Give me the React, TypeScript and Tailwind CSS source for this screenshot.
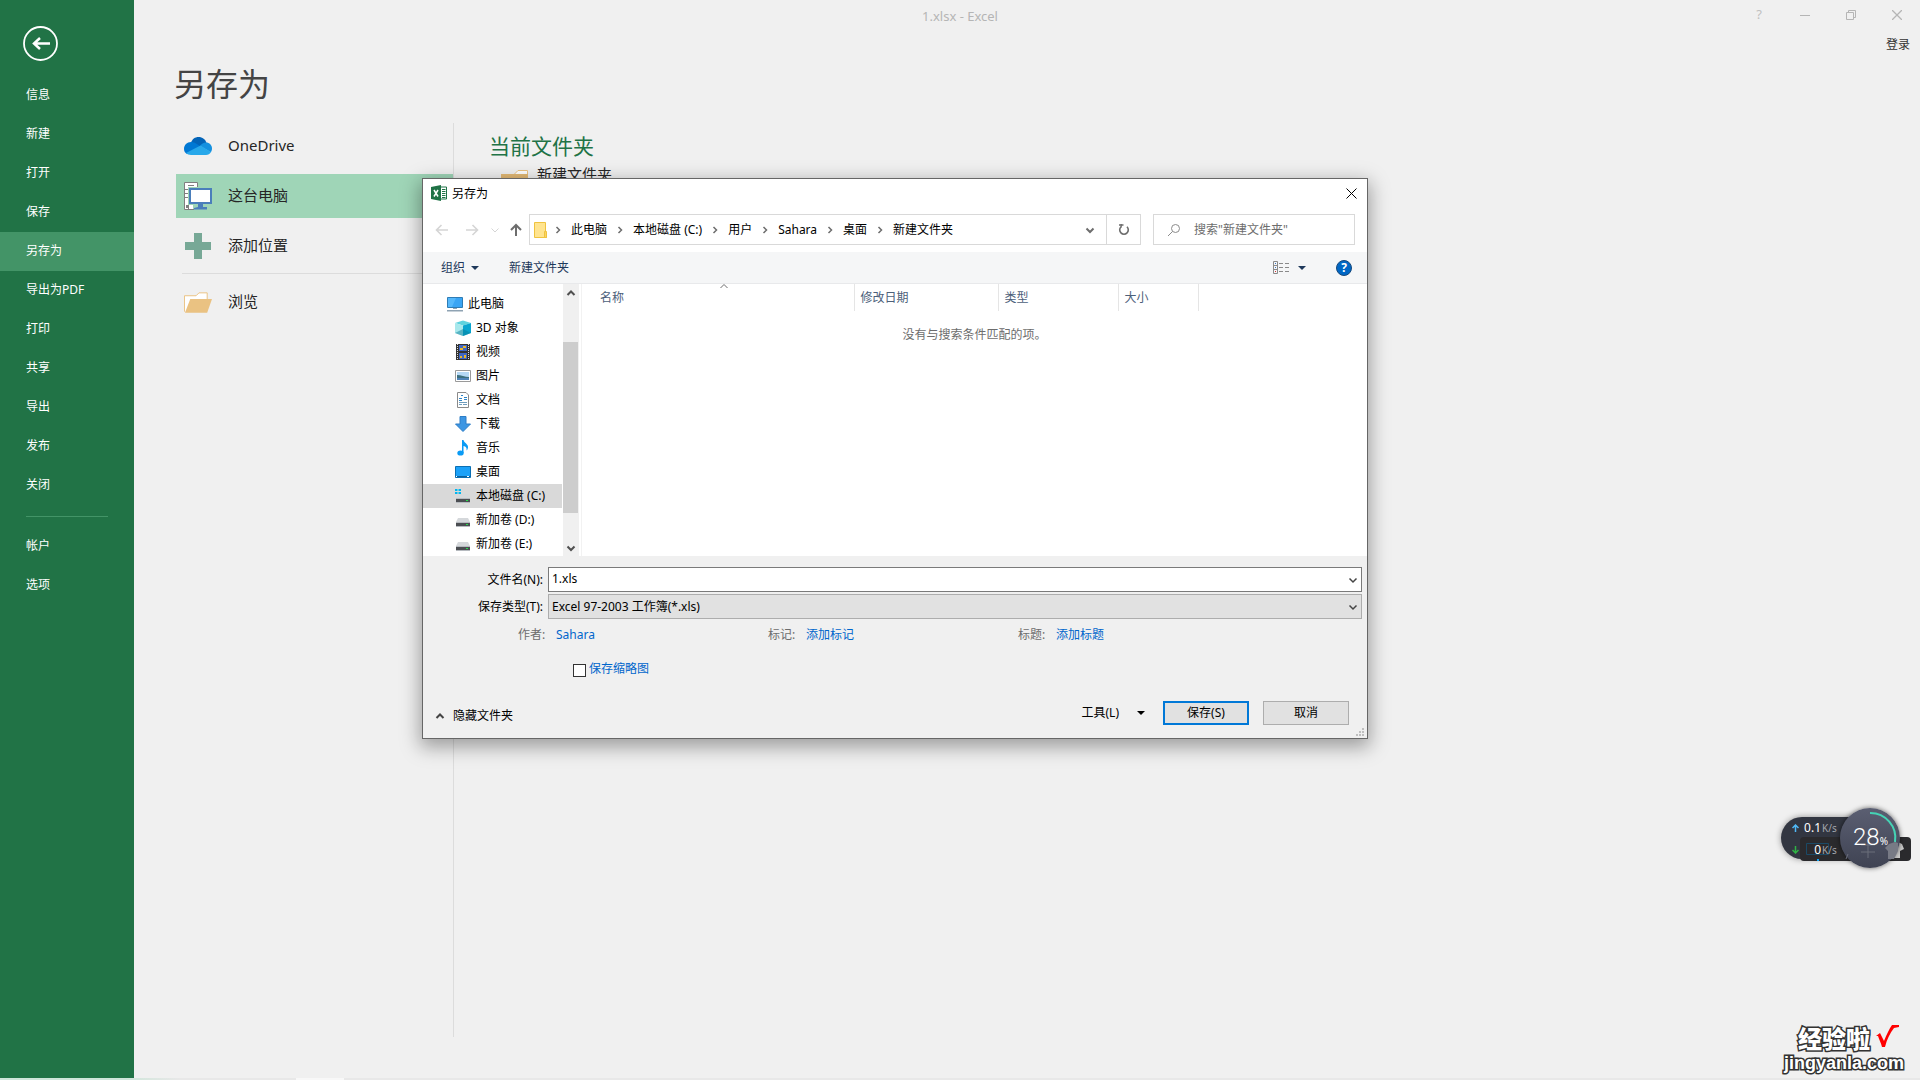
import { Fragment, useState } from "react";
import type { ReactNode } from "react";

const MENU = ["信息", "新建", "打开", "保存", "另存为", "导出为PDF", "打印", "共享", "导出", "发布", "关闭"];
const MENU_BOTTOM = ["帐户", "选项"];
const CRUMBS = ["此电脑", "本地磁盘 (C:)", "用户", "Sahara", "桌面", "新建文件夹"];

const META = [
  { label: "作者:", value: "Sahara" },
  { label: "标记:", value: "添加标记" },
  { label: "标题:", value: "添加标题" },
];

function Chevron({ dir, className }: { dir: "up" | "down" | "right"; className?: string }) {
  const d = { up: "M1.5 7 5 3.5 8.5 7", down: "M1.5 3.5 5 7 8.5 3.5", right: "M3.5 2 6.5 5 3.5 8" }[dir];
  return (
    <svg viewBox="0 0 10 10" className={`w-[10px] h-[10px] shrink-0 ${className ?? ""}`} fill="none" stroke="currentColor">
      <path d={d} />
    </svg>
  );
}

function Triangle({ className }: { className?: string }) {
  return (
    <svg viewBox="0 0 8 4" className={`w-2 h-1 shrink-0 ${className ?? ""}`} fill="currentColor">
      <path d="M0 0h8L4 4z" />
    </svg>
  );
}

function Icon16({ children }: { children: ReactNode }) {
  return (
    <svg viewBox="0 0 16 16" className="w-4 h-4 shrink-0" fill="none">
      {children}
    </svg>
  );
}

function OneDriveIcon() {
  return (
    <svg viewBox="0 0 28 18" className="w-7 h-[18px]">
      <path d="M7 6C8 2 11 0 14.500 0c4 0 7 2.500 8 6L14 11z" fill="#0364b8" />
      <path d="M7 5c2 0 3.500.5 5 1.500L19 11 3 17C1 16 0 14 0 12c0-4 3-7 7-7z" fill="#0078d4" />
      <path d="M22 5.500c3.500 0 6 2.700 6 6 0 1.500-.5 2.800-1.200 3.800L16 9c1.500-2 3.500-3.500 6-3.500z" fill="#1490df" />
      <path d="M16.500 8.500 27 15c-1 2-3 3-5 3H7c-2 0-4-.8-5-2z" fill="#28a8ea" />
    </svg>
  );
}

function ComputerIcon() {
  return (
    <svg viewBox="0 0 28 28" className="w-7 h-7" fill="none">
      <path d="M.5.5h13v27H.5z" fill="#fff" stroke="#7f7f7f" />
      <path d="M4 3.500h6M1 7.500h3M1 11.500h3M1 15.500h3" stroke="#7f7f7f" />
      <path d="M2 23h2v3H2z" fill="#7f7f7f" />
      <path d="M4 5h24v18h-5v5H9v-5H4z" fill="#9fd5b7" />
      <path d="M4.500 23v4.500H10" stroke="#7f7f7f" />
      <path d="M6 7h21v14H6z" fill="#fff" stroke="#4a7ebb" strokeWidth="2" />
      <path d="M14 22h5v3h4v2.500H10V26l4-1z" fill="#4a7ebb" />
    </svg>
  );
}

function PlusIcon() {
  return (
    <svg viewBox="0 0 26 26" className="w-[26px] h-[26px]">
      <path d="M9 0h8v9h9v8h-9v9H9v-9H0V9h9z" fill="#77a896" />
    </svg>
  );
}

function FolderIcon() {
  return (
    <svg viewBox="0 0 29 21" className="w-[29px] h-[21px]">
      <path d="M.5 20V3.500h12l3-3H24V8" fill="#fff" stroke="#eac282" />
      <path d="M6.500 7H29l-5 14H1z" fill="#eac282" />
    </svg>
  );
}

function ClosedFolderIcon() {
  return (
    <svg viewBox="0 0 27 21" className="w-[27px] h-[21px]">
      <path d="M13 4.500 17 .5h9.500V6" fill="#fff" stroke="#eac282" />
      <path d="M0 4h27v17H0z" fill="#e3b974" />
    </svg>
  );
}

function ExcelIcon() {
  return (
    <Icon16>
      <path d="M9 2h6.500v12H9z" fill="#fff" stroke="#1f7246" />
      <path d="M11 4.500h3.500M11 6.500h3.500M11 8.500h3.500M11 10.500h3.500M11 12.500h3.500" stroke="#1f7246" />
      <path d="M0 2 10 0v16L0 14z" fill="#1f7246" />
      <path d="m3 5 4 6.500M7 5l-4 6.500" stroke="#fff" strokeWidth="1.500" />
    </Icon16>
  );
}

function Drive() {
  return (
    <>
      <path d="M3 6h10l2 4H1z" fill="#d5d8db" />
      <path d="M1 10h14v4H1z" fill="#4b4e52" />
      <path d="M1 10h14v1H1zM1 14h14v1H1z" fill="#b6babf" />
      <path d="M11 12h2v1h-2z" fill="#25e04a" />
    </>
  );
}

const TREE: { name: string; root?: boolean; icon: ReactNode }[] = [
  {
    name: "此电脑",
    root: true,
    icon: (
      <>
        <path d="M.5 1.500h15v10H.5z" fill="#55b8fb" stroke="#2e7cb5" />
        <path d="M9 2h6v9H5z" fill="#3aa5f4" />
        <path d="M6 12h4v1H6zM0 14h16v1.500H0z" fill="#8fa3b3" />
      </>
    ),
  },
  {
    name: "3D 对象",
    icon: (
      <>
        <path d="M0 3 8 .5 16 3 8 5.500z" fill="#5fd3de" />
        <path d="M0 3l8 2.500V16l-8-3z" fill="#a8e8ec" />
        <path d="M16 3 8 5.500V16l8-3z" fill="#0aa5cf" />
        <path d="m0 13 8-4 8 4-8 3z" fill="#087f9c" opacity=".5" />
      </>
    ),
  },
  {
    name: "视频",
    icon: (
      <>
        <path d="M1 0h14v16H1z" fill="#333" />
        <path d="M4 1h8v6H4zM4 9h8v6H4z" fill="#3f67c4" />
        <path d="M5 4h3v2H5zM9 11h2v3H9zM8 2h3v2H8zM5 12h2v2H5z" fill="#e8b52c" />
        <path d="M2.500 0v16M13.500 0v16" stroke="#ddd" strokeDasharray="1 1" />
      </>
    ),
  },
  {
    name: "图片",
    icon: (
      <>
        <path d="M.5 2.500h15v11H.5z" fill="#fff" stroke="#9a9a9a" />
        <path d="M2 4h12v8H2z" fill="#b5d8f5" />
        <path d="M2 7c4 0 8 2 12 2v1H2z" fill="#3c6f7e" />
        <path d="M2 10h12v2H2z" fill="#4f83b8" />
      </>
    ),
  },
  {
    name: "文档",
    icon: (
      <>
        <path d="M2.500.5H11L13.500 3v12.500h-11z" fill="#fff" stroke="#8a8a8a" />
        <path d="M4 6.500h3M4 8.500h3M9 5.500h3M9 7.500h3M6 3.500h2" stroke="#2f86c9" />
        <path d="M4 10.500h8M4 12.500h3M8 12.500h4" stroke="#6f9dbd" />
      </>
    ),
  },
  {
    name: "下载",
    icon: <path d="M5 .5h6V8h4.500L8 15.500.5 8H5z" fill="#3c96e3" stroke="#2c7dc6" />,
  },
  {
    name: "音乐",
    icon: (
      <>
        <path d="M7 0h1.500c.5 3 5 4 4.500 7.500-.2 1.500-.8 2.500-1.500 3 .5-2.500-.5-4-3-4.500v7H7z" fill="#0a9bf5" />
        <ellipse cx="5.500" cy="13" rx="3.200" ry="2.600" fill="#0a9bf5" />
      </>
    ),
  },
  {
    name: "桌面",
    icon: (
      <>
        <path d="M.5 2.500h15v11H.5z" fill="#1ba1f8" stroke="#0b6fb3" />
        <path d="M1 12h14v1H1z" fill="#0b5f9b" />
        <path d="M1 12h1v1H1zM12 12h2v1h-2z" fill="#fff" />
      </>
    ),
  },
  {
    name: "本地磁盘 (C:)",
    icon: (
      <>
        <Drive />
        <path d="M0 1h2.500v2H0zM3.500 1H6v2H3.500zM0 4h2.500v2H0zM3.500 4H6v2H3.500z" fill="#00b7f0" />
      </>
    ),
  },
  { name: "新加卷 (D:)", icon: <Drive /> },
  { name: "新加卷 (E:)", icon: <Drive /> },
];

function Sidebar() {
  const item = "h-[39px] w-full shrink-0 pl-[26px] pb-[2px] text-left text-white";
  return (
    <nav className="w-[134px] shrink-0 bg-[#217346] text-xs flex flex-col">
      <div className="h-[76px] shrink-0 pl-[23px] pt-[26px]">
        <button aria-label="返回" className="block">
          <svg viewBox="0 0 35 35" className="w-[35px] h-[35px]" fill="none" stroke="#fff">
            <circle cx="17.500" cy="17.500" r="16.500" strokeWidth="1.800" />
            <path d="M27 17.500H11M17 12l-6 5.500 6 5.500" strokeWidth="2.500" />
          </svg>
        </button>
      </div>
      {MENU.map((m) => (
        <button key={m} className={`${item} ${m === "另存为" ? "bg-[#439467]" : ""}`}>
          {m}
        </button>
      ))}
      <hr className="ml-[26px] mr-[26px] mt-[11px] mb-[10px] border-[#439467]" />
      {MENU_BOTTOM.map((m) => (
        <button key={m} className={item}>
          {m}
        </button>
      ))}
    </nav>
  );
}

function TitleBar() {
  return (
    <header className="absolute inset-x-0 top-0 h-8 flex items-center justify-center text-[#b5b5b5]">
      <span className="text-[13px] pt-[2px]">1.xlsx - Excel</span>
      <div className="absolute right-3 flex items-center gap-[24px] pb-[2px]">
        <button aria-label="帮助" className="w-[22px] text-[13px] text-[#c0c0c0]">
          ?
        </button>
        <button aria-label="最小化" className="w-[22px] flex justify-center">
          <svg viewBox="0 0 10 10" className="w-[10px] h-[10px]" stroke="currentColor">
            <path d="M0 5.500h10" />
          </svg>
        </button>
        <button aria-label="还原" className="w-[22px] flex justify-center">
          <svg viewBox="0 0 10 10" className="w-[10px] h-[10px]" stroke="currentColor" fill="none">
            <path d="M.5 2.500h7v7h-7zM2.500 2.500v-2h7v7h-2" />
          </svg>
        </button>
        <button aria-label="关闭窗口" className="w-[22px] flex justify-center">
          <svg viewBox="0 0 10 10" className="w-[10px] h-[10px]" stroke="currentColor">
            <path d="m0 0 10 10M10 0 0 10" strokeWidth="1.300" />
          </svg>
        </button>
      </div>
    </header>
  );
}

function Place({ icon, name, active }: { icon: ReactNode; name: string; active?: boolean }) {
  return (
    <button
      className={`h-11 w-full flex items-center pl-2 text-[15px] text-[#262626] ${active ? "bg-[#9fd5b7]" : ""}`}
    >
      <span className="w-[28px] mr-4 flex justify-center">{icon}</span>
      <span className="pb-[2px]">{name}</span>
    </button>
  );
}

function Backstage() {
  return (
    <main className="flex-1 min-w-0 flex flex-col pt-[61px] pb-[41px]">
      <h1 className="ml-10 h-[62px] text-[32px] leading-[46px] text-[#444]">另存为</h1>
      <div className="flex flex-1">
        <div className="w-[320px] shrink-0 border-r border-[#dcdcdc] pl-[42px] pt-px flex flex-col gap-[6px]">
          <Place icon={<OneDriveIcon />} name="OneDrive" />
          <Place icon={<ComputerIcon />} name="这台电脑" active />
          <Place icon={<PlusIcon />} name="添加位置" />
          <hr className="ml-[6px] -mt-px border-[#dcdcdc]" />
          <Place icon={<FolderIcon />} name="浏览" />
        </div>
        <div className="pl-[35px] pt-[7px]">
          <h2 className="text-[21px] leading-8 text-[#217346]">当前文件夹</h2>
          <button className="flex items-start pl-3 text-[15px] leading-6 text-[#262626]">
            <span className="w-9 pt-2">
              <ClosedFolderIcon />
            </span>
            新建文件夹
          </button>
        </div>
      </div>
    </main>
  );
}

function AddressRow() {
  return (
    <div className="h-[31px] flex pr-3 pl-3">
      <div className="w-[94px] flex items-center text-[#d5d5d5]">
        <button aria-label="后退" className="mr-4">
          <svg viewBox="0 0 14 14" className="w-[14px] h-[14px]" fill="none" stroke="currentColor" strokeWidth="1.600">
            <path d="M6.500 2 1.500 7l5 5M1.500 7H13" />
          </svg>
        </button>
        <button aria-label="前进" className="mr-[11px]">
          <svg viewBox="0 0 14 14" className="w-[14px] h-[14px]" fill="none" stroke="currentColor" strokeWidth="1.600">
            <path d="M7.500 2l5 5-5 5M12.500 7H1" />
          </svg>
        </button>
        <Chevron dir="down" className="mr-[9px]" />
        <button aria-label="向上" className="text-[#6d6d6d]">
          <svg viewBox="0 0 14 14" className="w-[14px] h-[14px]" fill="none" stroke="currentColor" strokeWidth="2">
            <path d="M2 7l5-5 5 5M7 2v11" />
          </svg>
        </button>
      </div>
      <div className="flex-1 flex items-center border border-[#d9d9d9] pl-1">
        <svg viewBox="0 0 13 16" className="w-[13px] h-4 -mr-[2px]">
          <path d="M.5.5h11V11h1v4.500H.5z" fill="#ffe48f" stroke="#efc33f" />
          <path d="M10.500 9.500h2v6h-2z" fill="#fcd462" stroke="#efc33f" />
        </svg>
        {CRUMBS.map((c) => (
          <Fragment key={c}>
            <span className="w-[26px] flex justify-center text-[#6d6d6d]">
              <Chevron dir="right" className="[stroke-width:1.5]" />
            </span>
            <button className="text-black">{c}</button>
          </Fragment>
        ))}
        <button aria-label="历史位置" className="ml-auto mr-[11px] text-[#6d6d6d]">
          <Chevron dir="down" className="stroke-2" />
        </button>
        <button
          aria-label="刷新"
          className="w-[34px] h-full border-l border-[#d9d9d9] flex items-center justify-center text-[#6d6d6d]"
        >
          <svg viewBox="0 0 12 12" className="w-3 h-3" fill="none" stroke="currentColor" strokeWidth="1.600">
            <path d="M3 2.800A4.300 4.300 0 1 0 9 2.800" />
            <path d="M3.200 0v3.500M1 1h4.500" strokeWidth="1.300" />
          </svg>
        </button>
      </div>
      <label className="ml-3 w-[202px] flex items-center border border-[#d9d9d9] pl-[14px]">
        <svg viewBox="0 0 12 12" className="w-3 h-3 mr-[14px] shrink-0" fill="none" stroke="#8b8b8b">
          <circle cx="7.500" cy="4.500" r="4" />
          <path d="M4.500 7.500 0 12" />
        </svg>
        <input
          aria-label="搜索"
          placeholder={'搜索"新建文件夹"'}
          className="w-full min-w-0 bg-transparent outline-none placeholder:text-[#6d6d6d]"
        />
      </label>
    </div>
  );
}

function Toolbar() {
  return (
    <div className="h-8 mt-[7px] flex items-center bg-[#f5f6f7] border-b border-[#e8e9eb] pl-[18px] pr-[15px] text-[#1e395b]">
      <button className="flex items-center gap-[6px]">
        组织 <Triangle />
      </button>
      <button className="ml-[30px]">新建文件夹</button>
      <button aria-label="更改视图" className="ml-auto mr-[30px] flex items-center gap-[9px]">
        <svg viewBox="0 0 16 13" className="w-4 h-[13px]" fill="none" stroke="#8a8a8a">
          <path d="M.5.5h4v12h-4zM.5 4.500h4M.5 8.500h4M6 2.500h4M12 2.500h4M6 6.500h4M12 6.500h4M6 10.500h4M12 10.500h4" />
          <path d="M2 2.500h1M2 6.500h1" stroke="#3a78c8" />
          <path d="M2 10.500h1" stroke="#d33" />
        </svg>
        <Triangle />
      </button>
      <button
        aria-label="获取帮助"
        className="w-4 h-4 rounded-full bg-[#0067c5] border border-[#17497c] text-white font-bold leading-none"
      >
        ?
      </button>
    </div>
  );
}

function FileArea() {
  const [selected, setSelected] = useState("本地磁盘 (C:)");
  const col = "border-r border-[#e5e5e5] font-normal text-left pl-[6px]";
  return (
    <div className="h-[272px] flex bg-white">
      <ul className="w-[140px] pt-2 pr-px">
        {TREE.map((t) => (
          <li key={t.name}>
            <button
              onClick={() => setSelected(t.name)}
              className={`w-full h-6 flex items-center gap-[5px] text-black ${t.root ? "pl-6" : "pl-8"} ${
                t.name === selected ? "bg-[#d9d9d9]" : ""
              }`}
            >
              <Icon16>{t.icon}</Icon16>
              {t.name}
            </button>
          </li>
        ))}
      </ul>
      <div className="w-4 mr-[2px] bg-[#f0f0f0] flex flex-col items-center text-[#505050]">
        <Chevron dir="up" className="mt-1 mb-[44px] stroke-2" />
        <div className="w-[15px] h-[171px] mr-px bg-[#cdcdcd]" />
        <Chevron dir="down" className="mt-auto mb-[3px] stroke-2" />
      </div>
      <div className="flex-1 border-l border-[#f2f2f2]">
        <table className="table-fixed w-[616px] h-[27px] text-[#4c607a]">
          <thead>
            <tr>
              <th className={`${col} w-[272px] relative`}>
                <span className="pl-3">名称</span>
                <Chevron dir="up" className="absolute left-[137px] -top-[3px] text-[#6d6d6d]" />
              </th>
              <th className={`${col} w-36`}>修改日期</th>
              <th className={`${col} w-[120px]`}>类型</th>
              <th className={`${col} w-20`}>大小</th>
            </tr>
          </thead>
        </table>
        <p className="mt-4 text-center text-[#6d6d6d]">没有与搜索条件匹配的项。</p>
      </div>
    </div>
  );
}

function SaveForm() {
  const [name, setName] = useState("1.xls");
  return (
    <div className="pt-[11px] pr-[5px] text-black">
      <div className="grid grid-cols-[120px_1fr] gap-x-[5px] gap-y-[2px] items-center">
        <label htmlFor="filename" className="text-right">
          文件名(N):
        </label>
        <div className="h-[25px] flex items-center bg-white border border-[#7a7a7a] pl-[3px] pr-[3px]">
          <input
            id="filename"
            value={name}
            onChange={(e) => setName(e.target.value)}
            className="flex-1 bg-transparent outline-none pb-[2px]"
          />
          <Chevron dir="down" className="text-[#444] [stroke-width:1.5]" />
        </div>
        <label htmlFor="filetype" className="text-right">
          保存类型(T):
        </label>
        <div className="relative h-[25px]">
          <select
            id="filetype"
            className="w-full h-full appearance-none bg-[#e1e1e1] border border-[#adadad] pl-[3px] outline-none"
          >
            <option>Excel 97-2003 工作簿(*.xls)</option>
          </select>
          <Chevron dir="down" className="absolute right-1 top-2 text-[#444] [stroke-width:1.5]" />
        </div>
      </div>
      <dl className="flex mt-2 pl-[95px]">
        {META.map((m) => (
          <div key={m.label} className="w-[250px] flex">
            <dt className="w-[38px] text-[#6d6d6d]">{m.label}</dt>
            <dd>
              <a href="#" className="text-[#0066cc]">
                {m.value}
              </a>
            </dd>
          </div>
        ))}
      </dl>
      <label className="mt-[18px] ml-[150px] w-fit flex items-end gap-[3px] text-[#0066cc]">
        <input type="checkbox" className="appearance-none w-[13px] h-[13px] bg-white border border-[#333]" />
        保存缩略图
      </label>
    </div>
  );
}

function SaveDialog() {
  const btn = "w-[86px] h-6 bg-[#e1e1e1]";
  return (
    <div
      role="dialog"
      aria-label="另存为"
      className="absolute left-[422px] top-[178px] w-[946px] bg-[#f0f0f0] border border-[#666] text-xs leading-4 shadow-[0_6px_18px_2px_rgba(0,0,0,0.35)]"
    >
      <div className="bg-white">
        <div className="h-[35px] pb-[7px] flex items-center pl-2 pr-2 text-black">
          <ExcelIcon />
          <span className="ml-[5px] pt-[2px]">另存为</span>
          <button aria-label="关闭" className="ml-auto w-4 flex justify-center">
            <svg viewBox="0 0 11 11" className="w-[11px] h-[11px]" stroke="#000">
              <path d="m.5.5 10 10M10.500.5l-10 10" />
            </svg>
          </button>
        </div>
        <AddressRow />
        <Toolbar />
      </div>
      <FileArea />
      <SaveForm />
      <div className="h-[61px] pb-[13px] flex items-end text-black pl-3 pr-[18px]">
        <button className="h-[18px] flex items-center gap-2">
          <Chevron dir="up" className="text-[#444] stroke-2" />
          隐藏文件夹
        </button>
        <button className="h-6 ml-auto mr-[18px] flex items-center gap-[18px]">
          工具(L)
          <Triangle />
        </button>
        <button className={`${btn} border-2 border-[#0078d7] mr-[14px]`}>保存(S)</button>
        <button className={`${btn} border border-[#adadad]`}>取消</button>
      </div>
      <svg viewBox="0 0 8 8" className="absolute right-[3px] bottom-[2px] w-2 h-2" fill="#bfbfbf">
        <path d="M6 0h2v2H6zM3 3h2v2H3zM6 3h2v2H6zM0 6h2v2H0zM3 6h2v2H3zM6 6h2v2H6z" />
      </svg>
    </div>
  );
}

function SpeedWidget() {
  return (
    <div className="absolute right-[9px] top-[808px] w-[130px] h-[60px] text-white">
      <div className="absolute left-0 top-[9px] w-[90px] h-[42px] rounded-full bg-[#323641] shadow-[0_0_6px_rgba(0,0,0,0.4)]" />
      <div className="absolute left-[19px] right-0 top-[29px] h-6 rounded bg-[#2a2a2d]">
        <svg viewBox="0 0 111 24" className="w-full h-full" fill="none">
          <path d="M6.500 6.500h22v11h-22z" stroke="#1b4a66" />
          <path d="M17 22h2v2h-2z" fill="#12a5f4" />
          <path d="m86 7 5-3h5l6 3 2 5-4 2v7H88v-7l-4-2z" fill="#c9c9c9" />
        </svg>
      </div>
      <div className="absolute left-[11px] top-[11px] text-xs leading-[18px]">
        {[
          ["0.1", "#4fb8f5", "M3.500 8V1M.5 4l3-3 3 3"],
          ["0", "#2fb344", "M3.500 0v7M.5 4l3 3 3-3"],
        ].map(([v, color, d], i) => (
          <div key={v} className={`flex items-center w-[46px] ${i ? "mt-1" : ""}`}>
            <svg viewBox="0 0 7 8" className="w-[7px] h-2 shrink-0" fill="none" stroke={color} strokeWidth="1.500">
              <path d={d} />
            </svg>
            <span className="w-[22px] text-right">{v}</span>
            <span className="pl-px text-[10px] text-[#a3a6ad]">K/s</span>
          </div>
        ))}
      </div>
      <div className="absolute right-[11px] top-0 w-[60px] h-[60px] rounded-full bg-linear-to-b from-[#5b5f72] to-[#3f4353] shadow-[0_0_5px_rgba(0,0,0,0.6)]">
        <svg viewBox="0 0 60 60" className="absolute inset-0" fill="none">
          <path d="M30 5a25 25 0 0 1 25 29" stroke="#45d3b5" strokeWidth="2" />
          <path d="M21 37h14M21 44h14M28 28v22M8 46l-2 5" stroke="#6b6e7b" />
          <path d="m49 36 6-2 3 1v8l-4 8h-6v-8l-3-3z" fill="#777a85" />
        </svg>
        <div className="absolute left-[13px] top-[17px] flex items-end leading-6">
          <span className="font-[Roboto] font-light text-[24px]">28</span>
          <span className="text-[10px] leading-4">%</span>
        </div>
      </div>
    </div>
  );
}

function Watermark() {
  const outline = "[paint-order:stroke_fill] [-webkit-text-stroke:3px_#333] text-white";
  return (
    <div className="absolute right-4 bottom-[7px] flex flex-col items-end">
      <div className="flex items-center gap-[6px] pr-1">
        <span className={`text-2xl leading-[26px] font-black ${outline}`}>经验啦</span>
        <svg viewBox="0 0 24 24" className="w-6 h-6 mb-1" fill="#f00">
          <path d="M0 11l4-3 4 8C11 9 13 4 16 0h7v2l-5 1c-4 5-7 11-9 19H6C5 18 3 14 2 11z" />
        </svg>
      </div>
      <span className={`font-["Liberation_Sans"] text-lg leading-5 font-bold ${outline}`}>jingyanla.com</span>
    </div>
  );
}

export default function App() {
  return (
    <div className='relative h-screen min-h-[760px] flex flex-col overflow-hidden bg-[#f0f0f0] font-["Noto_Sans","Noto_Sans_CJK_SC",sans-serif]'>
      <div className="flex flex-1">
        <Sidebar />
        <Backstage />
      </div>
      <div className="h-[2px] flex bg-[#e8e8e8]">
        <div className="w-[180px] bg-linear-to-r from-[#cfe6da] from-70% to-[#e8e8e8]" />
        <div className="w-12 ml-[116px] bg-[#f8f8f8]" />
      </div>
      <TitleBar />
      <button className="absolute right-[10px] top-[37px] text-xs text-[#333]">登录</button>
      <SaveDialog />
      <SpeedWidget />
      <Watermark />
    </div>
  );
}
